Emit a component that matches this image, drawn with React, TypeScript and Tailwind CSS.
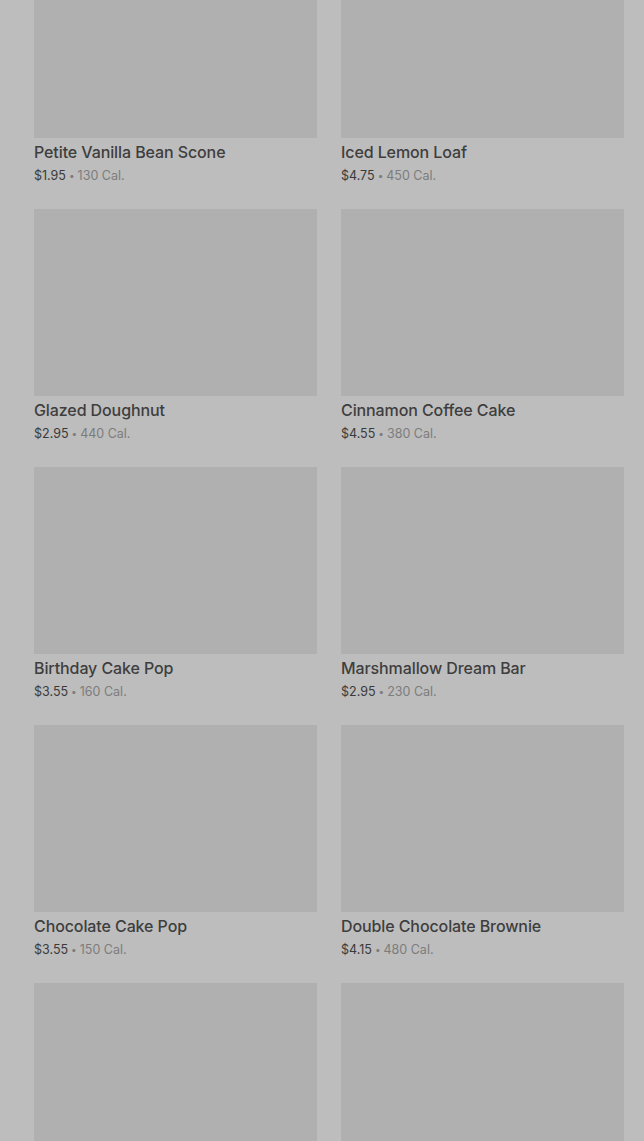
import React from "react";

const items = [
  { name: "Petite Vanilla Bean Scone", price: "$1.95", cal: "130 Cal." },
  { name: "Iced Lemon Loaf", price: "$4.75", cal: "450 Cal." },
  { name: "Glazed Doughnut", price: "$2.95", cal: "440 Cal." },
  { name: "Cinnamon Coffee Cake", price: "$4.55", cal: "380 Cal." },
  { name: "Birthday Cake Pop", price: "$3.55", cal: "160 Cal." },
  { name: "Marshmallow Dream Bar", price: "$2.95", cal: "230 Cal." },
  { name: "Chocolate Cake Pop", price: "$3.55", cal: "150 Cal." },
  { name: "Double Chocolate Brownie", price: "$4.15", cal: "480 Cal." },
  { name: "", price: "", cal: "" },
  { name: "", price: "", cal: "" },
];

const MenuCard = ({ name, price, cal }: { name: string; price: string; cal: string }) => {
  return (
    <div className="flex flex-col">
      {/* image placeholder */}
      <div className="h-[187px] w-full bg-[#b0b0b0]" />
      {name && (
        <div className="flex flex-col pt-[4px]">
          <span className="text-[16px] leading-[20px] font-medium tracking-[-0.1px] text-[#3e3e3e]">{name}</span>
          <span className="text-[12.5px] leading-[18px] mt-[5px] text-[#3a3a3a]">
            {price}
            <span className="text-[#7c7c7c]">
              <span className="relative -top-[1px] text-[10px] mx-[3px]">•</span>
              {cal}
            </span>
          </span>
        </div>
      )}
    </div>
  );
};

export default function App() {
  return (
    <div
      className="h-[1141px] w-full overflow-hidden bg-[#bdbdbd]"
      style={{ fontFamily: "Inter, Roboto, sans-serif" }}
    >
      {/* scrolled grid */}
      <div className="-mt-[49px] pl-[34px] pr-[20px] grid grid-cols-2 gap-x-[24px] gap-y-[24px]">
        {items.map((it, idx) => (
          <MenuCard key={idx} {...it} />
        ))}
      </div>
    </div>
  );
}
